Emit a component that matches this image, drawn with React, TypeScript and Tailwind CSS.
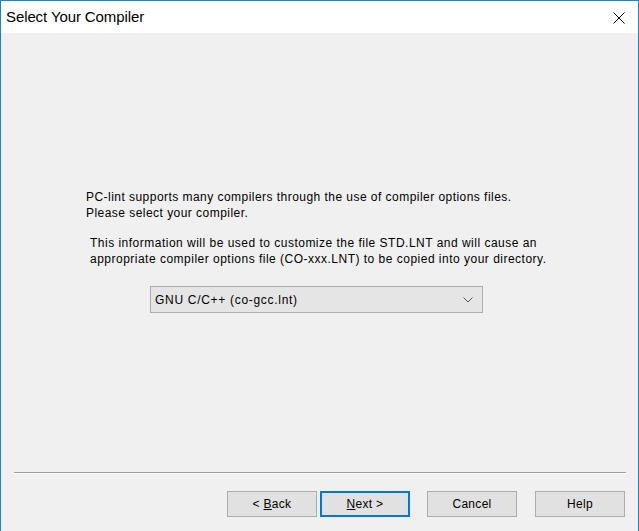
import React from "react";

function WizButton({ children, primary }: { children: React.ReactNode; primary?: boolean }) {
  return (
    <button
      className={
        primary
          ? "w-[90px] h-[26px] bg-[#e1e1e1] border-2 border-[#0078d7] text-[12px] text-black flex items-center justify-center tracking-[0.3px]"
          : "w-[90px] h-[26px] bg-[#e1e1e1] border border-[#adadad] text-[12px] text-black flex items-center justify-center tracking-[0.3px]"
      }
    >
      {children}
    </button>
  );
}

export default function App() {
  return (
    <div className="w-[639px] h-[531px] flex flex-col border-x border-t border-[#1883d7] bg-[#f0f0f0] font-['Liberation_Sans',Arial,sans-serif] text-black overflow-hidden">
      <div className="h-[32px] shrink-0 bg-white flex items-center justify-between pl-[5px] pr-[13px]">
        <span className="text-[15px] pt-[1px] tracking-[-0.1px]">Select Your Compiler</span>
        <svg width="12" height="12" viewBox="0 0 12 12" className="mt-[1px]">
          <path d="M0.5 0.5 L11.5 11.5 M11.5 0.5 L0.5 11.5" stroke="#000" strokeWidth="1" fill="none" />
        </svg>
      </div>

      <div className="flex-1 flex flex-col">
        <div className="pt-[156px] pl-[85px] text-[12px] leading-[16px]">
          <p className="tracking-[0.46px]">
            PC-lint supports many compilers through the use of compiler options files.
            <br />
            Please select your compiler.
          </p>
          <p className="mt-[14px] pl-[4px] tracking-[0.49px]">
            This information will be used to customize the file STD.LNT and will cause an
            <br />
            appropriate compiler options file (CO-xxx.LNT) to be copied into your directory.
          </p>
        </div>

        <div className="ml-[149px] mt-[19px] w-[333px] h-[27px] bg-[#e5e5e5] border border-[#adadad] flex items-center justify-between pl-[4px] pr-[9px]">
          <span className="text-[12px] tracking-[0.7px]">GNU C/C++ (co-gcc.lnt)</span>
          <svg width="10" height="6" viewBox="0 0 10 6">
            <polyline points="0.5,0.5 5,5 9.5,0.5" stroke="#555" strokeWidth="1" fill="none" />
          </svg>
        </div>

        <div className="flex-1" />

        <div className="ml-[13px] mr-[12px] border-t border-[#a0a0a0] border-b border-b-white" />

        <div className="flex justify-end items-center pr-[13px] mt-[17px] mb-[14px]">
          <WizButton>
            <span>
              &lt; <span className="underline">B</span>ack
            </span>
          </WizButton>
          <div className="ml-[3px]">
            <WizButton primary>
              <span>
                <span className="underline">N</span>ext &gt;
              </span>
            </WizButton>
          </div>
          <div className="ml-[17px]">
            <WizButton>Cancel</WizButton>
          </div>
          <div className="ml-[18px]">
            <WizButton>Help</WizButton>
          </div>
        </div>
      </div>
    </div>
  );
}
